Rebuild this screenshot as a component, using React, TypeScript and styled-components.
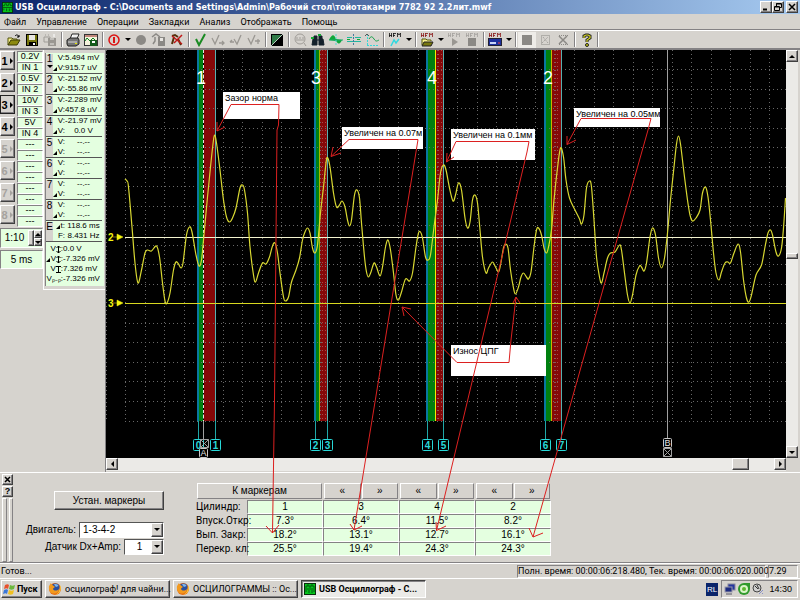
import React from "react";
import styled, { createGlobalStyle, css } from "styled-components";

const FACE = "#d6d3ce";
const MINT = "#e4ffe0";
const SANS = '"Liberation Sans", Arial, sans-serif';
const UI = 'Roboto, "Liberation Sans", sans-serif';
const TITLE = '"DejaVu Sans Condensed", "DejaVu Sans", sans-serif';

const Global = createGlobalStyle`
  * { box-sizing: border-box; }
  body { margin: 0; background: ${FACE}; }
  button, select, input { font: inherit; color: inherit; margin: 0; border-radius: 0; }
`;

const raised = css`
  border: 1px solid;
  border-color: #fff #404040 #404040 #fff;
  box-shadow: inset -1px -1px 0 #848284;
  background: ${FACE};
`;
const sunken = css`
  border: 1px solid;
  border-color: #848284 #fff #fff #848284;
`;

const Page = styled.div`
  position: relative;
  display: flex;
  flex-direction: column;
  min-height: 100vh;
  background: ${FACE};
  color: #000;
  font: 9px/12px ${UI};
  overflow: hidden;
`;

/* ---------- window frame ---------- */
const TitleBar = styled.header`
  display: flex;
  align-items: center;
  height: 14px;
  padding: 0 2px;
  gap: 2px;
  background: linear-gradient(90deg, #0a246a, #a6caf0);
  color: #fff;
  font: bold 9px/14px ${TITLE};
`;
const TitleText = styled.h1`
  flex: 1;
  margin: 0;
  font: inherit;
  white-space: nowrap;
`;
const WindowButtons = styled.div`
  display: flex;
`;
const WindowButton = styled.button<{ $apart?: boolean }>`
  ${raised}
  display: grid;
  place-items: center;
  width: 12px;
  height: 12px;
  padding: 0;
  margin-left: ${(p) => (p.$apart ? 2 : 0)}px;
`;

const MenuBar = styled.nav`
  display: flex;
  align-items: center;
  gap: 10px;
  height: 16px;
  padding: 0 4px;
  border-bottom: 1px solid #848284;
`;
const MenuLink = styled.a`
  color: #000;
  text-decoration: none;
`;

const ToolBar = styled.div`
  display: flex;
  align-items: center;
  height: 20px;
  padding-left: 5px;
  border-top: 1px solid #fff;
  border-bottom: 2px solid #848284;
`;
const ToolButton = styled.button<{ $pressed?: boolean }>`
  display: grid;
  place-items: center;
  width: 18px;
  height: 16px;
  padding: 0;
  border: 0;
  background: ${(p) => (p.$pressed ? "#eeece8" : "transparent")};
`;
const DropButton = styled(ToolButton)`
  width: 9px;
`;
const Divider = styled.span`
  width: 2px;
  height: 15px;
  margin: 0 1px 0 2px;
  border-left: 1px solid #848284;
  border-right: 1px solid #fff;
`;

/* ---------- workspace ---------- */
const Workspace = styled.main`
  display: grid;
  grid-template-columns: 106px minmax(0, 1fr) 14px;
  grid-template-rows: minmax(0, 1fr) 14px;
  flex: 1;
  min-height: 422px;
  border-bottom: 1px solid #fff;
`;
const SidePanel = styled.aside`
  display: flex;
  align-items: flex-start;
  grid-row: 1 / 3;
  border-right: 1px solid #848284;
`;
const ChannelColumn = styled.div`
  width: 43px;
  display: flex;
  flex-direction: column;
  gap: 2px;
  padding-top: 1px;
  font: 9px/10px ${SANS};
`;
const ChannelRow = styled.div`
  display: grid;
  grid-template-columns: 15px 1fr;
  gap: 2px;
  height: 20px;
`;
const ChannelButton = styled.button<{ $active?: boolean }>`
  ${raised}
  display: flex;
  align-items: center;
  justify-content: center;
  gap: 1px;
  padding: 0;
  height: 19px;
  font: bold 11px/12px ${SANS};
  &:disabled { color: #a5a29e; }
  outline: ${(p) => (p.$active ? "1px solid #222" : "none")};
  outline-offset: -1px;
`;
const RangeStack = styled.div`
  display: grid;
  grid-template-rows: 1fr 1fr;
`;
const RangeCell = styled.output`
  ${sunken}
  display: block;
  background: ${MINT};
  text-align: center;
  line-height: 9px;
  overflow: hidden;
`;
const SpinRow = styled.label`
  ${sunken}
  display: flex;
  align-items: center;
  height: 20px;
  margin-top: 1px;
  background: ${MINT};
`;
const SpinInput = styled.input`
  width: 27px;
  padding: 0;
  border: 0;
  background: transparent;
  text-align: center;
  font: 10px/12px ${SANS};
`;
const SpinArrows = styled.span`
  display: grid;
  grid-template-columns: 6px 8px;
  grid-template-rows: 8px 8px;
  background: ${FACE};
`;
const SpinArrow = styled.button<{ $tall?: boolean }>`
  ${raised}
  display: grid;
  place-items: center;
  padding: 0;
  grid-row: ${(p) => (p.$tall ? "1 / 3" : "auto")};
`;
const TimeCell = styled.output`
  ${sunken}
  display: block;
  height: 19px;
  background: ${MINT};
  text-align: center;
  font: 10px/17px ${SANS};
`;

const ReadoutColumn = styled.div`
  flex: 1;
  padding: 3px 1px 3px 1px;
  border-left: 1px solid #fff;
  border-bottom: 1px solid #fff;
`;
const ReadoutBody = styled.div`
  padding: 0 2px 2px 0;
  border-left: 1px solid #848284;
  background: ${MINT};
  font: 8px/10px ${SANS};
`;
const Readout = styled.section`
  display: grid;
  grid-template-columns: 7px 1fr;
  height: 21px;
  border-bottom: 1px solid #555;
`;
const ReadoutTag = styled.div`
  display: flex;
  flex-direction: column;
  align-items: center;
  margin-top: 1px;
  background: ${FACE};
  font: 10px/10px ${SANS};
`;
const ReadoutLine = styled.div<{ $wide?: boolean }>`
  display: grid;
  grid-template-columns: ${(p) => (p.$wide ? 17 : 12)}px 1fr;
  white-space: nowrap;
`;
const Sym = styled.span`
  display: flex;
  align-items: center;
  justify-content: flex-end;
`;
const Value = styled.output<{ $center?: boolean }>`
  text-align: ${(p) => (p.$center ? "center" : "left")};
`;
const Summary = styled.div`
  padding: 2px 0 0;
`;

const Plot = styled.div`
  position: relative;
  background: #000;
  overflow: hidden;
  & > svg { display: block; width: 100%; height: 100%; }
`;
const Note = styled.div<{ $x: number; $y: number; $w: number; $h: number }>`
  position: absolute;
  left: ${(p) => p.$x}px;
  top: ${(p) => p.$y}px;
  width: ${(p) => p.$w}px;
  height: ${(p) => p.$h}px;
  padding: 0 2px;
  background: #fff;
  font: 9px/12px ${SANS};
  white-space: nowrap;
`;
const PointerLayer = styled.svg`
  position: absolute;
  inset: 0;
  width: 100%;
  height: 100%;
  pointer-events: none;
`;

const Scroll = styled.div<{ $vertical?: boolean }>`
  display: flex;
  flex-direction: ${(p) => (p.$vertical ? "column" : "row")};
  background: #ebeae7;
  border-right: ${(p) => (p.$vertical ? `2px solid ${FACE}` : "0")};
  border-bottom: ${(p) => (p.$vertical ? "0" : "1px solid #d6d3ce")};
`;
const ScrollButton = styled.button`
  ${raised}
  display: grid;
  place-items: center;
  width: 12px;
  height: 12px;
  padding: 0;
`;
const Gap = styled.span<{ $grow: number }>`
  flex: ${(p) => p.$grow};
`;
const Thumb = styled.span<{ $vertical?: boolean }>`
  ${raised}
  width: ${(p) => (p.$vertical ? 12 : 17)}px;
  height: ${(p) => (p.$vertical ? 6 : 12)}px;
`;

/* ---------- marker panel ---------- */
const MarkerPanel = styled.section`
  display: flex;
  align-items: flex-start;
  height: 90px;
  padding: 1px 2px 0;
  border-bottom: 1px solid #848284;
  font: 10px/12px ${SANS};
`;
const DockStrip = styled.div`
  display: grid;
  grid-template-columns: 1fr 1fr;
  grid-template-rows: 11px 11px 64px;
  column-gap: 2px;
  row-gap: 1px;
  width: 11px;
`;
const DockButton = styled.button`
  ${raised}
  grid-column: 1 / 3;
  display: grid;
  place-items: center;
  padding: 0;
  font: bold 9px/9px ${SANS};
`;
const Grip = styled.span`
  border: 1px solid;
  border-color: #fff #848284 #848284 #fff;
`;
const SetupForm = styled.div`
  display: grid;
  justify-items: end;
  width: 151px;
  padding-top: 17px;
  font: 10px/12px ${SANS};
`;
const SetButton = styled.button`
  ${raised}
  width: 110px;
  height: 19px;
  padding: 0;
  margin-bottom: 11px;
  font: 10px/13px ${SANS};
`;
const Field = styled.label`
  display: flex;
  align-items: center;
  gap: 3px;
  height: 17px;
  white-space: nowrap;
`;
const SelectBox = styled.span<{ $w: number }>`
  ${sunken}
  border-color: #555 #fff #fff #555;
  display: grid;
  grid-template-columns: 1fr 12px;
  width: ${(p) => p.$w}px;
  height: 16px;
  background: #fff;
`;
const Select = styled.select<{ $center?: boolean }>`
  appearance: none;
  grid-area: 1 / 1 / 2 / 3;
  border: 0;
  padding: 0 12px 0 3px;
  background: transparent;
  text-align: ${(p) => (p.$center ? "center" : "left")};
  font: 10px/12px ${SANS};
`;
const SelectArrow = styled.span`
  ${raised}
  grid-area: 1 / 2 / 2 / 3;
  display: grid;
  place-items: center;
  pointer-events: none;
`;
const MarkerTable = styled.table`
  margin: 9px 0 0 32px;
  width: 355px;
  table-layout: fixed;
  border-collapse: separate;
  border-spacing: 0;
  font: 10px/12px ${SANS};
  th, td { padding: 0; font-weight: normal; }
`;
const LabelCol = styled.col`
  width: 51px;
`;
const HeadCell = styled.th`
  height: 17px;
  vertical-align: top;
`;
const HeadButtons = styled.div`
  display: flex;
  gap: 1px;
  padding: 0 1px;
`;
const StepButton = styled.button`
  border: 1px solid;
  border-color: #fff #848284 #848284 #fff;
  background: ${FACE};
  flex: 1;
  height: 16px;
  padding: 0;
  font: 10px/12px ${SANS};
`;
const RowHead = styled.th`
  height: 14px;
  text-align: left;
  white-space: nowrap;
  font: 10px/12px ${UI};
`;
const Cell = styled.td`
  text-align: center;
  background: ${MINT};
  border: 1px solid;
  border-color: #848284 #fff #fff #848284;
`;

/* ---------- status and task bars ---------- */
const StatusBar = styled.footer`
  display: flex;
  align-items: center;
  gap: 2px;
  height: 15px;
  padding: 0 2px 0 1px;
  border-top: 1px solid #fff;
`;
const StatusText = styled.span`
  flex: 1;
`;
const StatusField = styled.span<{ $w: number }>`
  ${sunken}
  width: ${(p) => p.$w}px;
  height: 13px;
  font: 9px/11px ${UI};
  white-space: nowrap;
`;
const TaskBar = styled.div`
  display: flex;
  align-items: center;
  gap: 3px;
  height: 22px;
  padding: 0 2px 1px 1px;
  border-top: 1px solid #fff;
`;
const TaskButton = styled.button<{ $active?: boolean; $start?: boolean }>`
  ${raised}
  ${(p) =>
    p.$active &&
    css`
      border-color: #404040 #fff #fff #404040;
      box-shadow: inset 1px 1px 0 #848284;
      background: #ebeae7;
    `}
  display: flex;
  align-items: center;
  gap: ${(p) => (p.$start ? 1 : 3)}px;
  width: ${(p) => (p.$start ? 41 : 125)}px;
  height: 18px;
  padding: 0 ${(p) => (p.$start ? 1 : 2)}px;
  font: ${(p) => (p.$active || p.$start ? "bold" : "normal")} 9px/12px ${UI};
  white-space: nowrap;
  svg { flex: none; }
`;
const Spring = styled.span`
  flex: 1;
`;
const Lang = styled.span`
  width: 12px;
  background: #0a246a;
  color: #fff;
  text-align: center;
  font: 8px/13px ${SANS};
`;
const Tray = styled.div`
  ${sunken}
  display: flex;
  align-items: center;
  gap: 2px;
  width: 77px;
  height: 18px;
  padding: 0 2px;
`;
const Clock = styled.time`
  margin-left: auto;
  padding-right: 3px;
  font: 9px/12px ${SANS};
`;

/* ---------- glyphs ---------- */
const Tri = ({ d, c = "#000" }: { d: "u" | "d" | "l" | "r"; c?: string }) => {
  const pts = { u: "0,4 3,1 6,4", d: "0,1 6,1 3,4", l: "4,0 4,6 1,3", r: "1,0 4,3 1,6" }[d];
  const flat = d === "u" || d === "d";
  return (
    <svg width={flat ? 6 : 5} height={flat ? 5 : 6} aria-hidden>
      <polygon points={pts} fill={c} />
    </svg>
  );
};
const Delta = () => (
  <svg width="5" height="7" aria-hidden>
    <path d="M0 6h4V2z" fill="#000" />
  </svg>
);
const Span = ({ bars }: { bars?: boolean }) => (
  <svg width="5" height="9" fill="none" stroke="#000" aria-hidden>
    <path d="M2.500 1v7" />
    <path d={bars ? "M0 1.500h5M0 7.500h5" : "M.5 3l2-2 2 2M.5 6l2 2 2-2"} />
  </svg>
);
const Smile = ({ s = 12 }: { s?: number }) => (
  <svg width={s} height={s} viewBox="0 0 12 12" aria-hidden>
    <rect width="12" height="12" fill="#08300c" />
    <rect x="1" y="1" width="10" height="10" fill="#06c51c" />
    <path d="M1 4h2v-2h2v2h2v-2h2v2h2M1 6h10M2 9v-2M5 10v-3M8 10v-3M10 9v-2" stroke="#045a10" fill="none" />
  </svg>
);
const Ico = ({ children }: { children: React.ReactNode }) => (
  <svg width="16" height="14" viewBox="0 0 16 14" fill="none" aria-hidden>
    {children}
  </svg>
);
const HexWord = ({ c = "#8b1a1a" }: { c?: string }) => (
  <path d="M2.500 0v4M2 2.500h3M4.500 0v4M6.500 0v4M6 .5h3M6 2.500h2M10.500 4v-4l1.500 2 1.500-2v4" stroke={c} strokeWidth=".8" />
);

const icons: Record<string, React.ReactNode> = {
  open: (
    <Ico>
      <path d="M2 12V5h4l1 1h4v2" fill="#f7f08c" stroke="#55550a" />
      <path d="M2 12l3-5h9l-3 5z" fill="#8c8a10" stroke="#3b3b05" />
      <path d="M9 3c2-2 3-1 4 1M13 2v2h-2" stroke="#000" />
    </Ico>
  ),
  save: (
    <Ico>
      <rect x="2.500" y="1.500" width="11" height="11" fill="#77770f" stroke="#000" />
      <rect x="5" y="2" width="6" height="5" fill="#e8e6e2" />
      <rect x="5" y="9" width="7" height="3" fill="#000" />
      <rect x="9" y="10" width="2" height="2" fill="#fff" />
    </Ico>
  ),
  saveAs: (
    <Ico>
      <path d="M2 4h6v5h-6zM3 2h1M6 2h1" stroke="#a09d98" />
      <rect x="6" y="5" width="8" height="8" fill="#9a9792" />
      <path d="M8 6h4M8 11h4" stroke="#e8e6e2" />
      <path d="M12 1v3" stroke="#fff" />
    </Ico>
  ),
  print: (
    <Ico>
      <path d="M5 6l2-5h7l-2 5z" fill="#fff" stroke="#222" />
      <path d="M2 7l3-2h8l1 2v4l-3 2h-8l-1-2z" fill="#777" stroke="#222" />
      <path d="M3 9h9M8 3h4" stroke="#ddd" />
      <rect x="10" y="10" width="2" height="1" fill="#e6e600" />
    </Ico>
  ),
  picture: (
    <Ico>
      <rect x="1.500" y="1.500" width="13" height="11" fill="#f5f3dc" stroke="#333" />
      <path d="M2 3h12" stroke="#8b1a1a" />
      <path d="M2 8l2-3 3 3 3-3 2 2" stroke="#0a7d1d" />
      <rect x="7" y="7" width="7" height="6" fill="#145c1c" />
      <rect x="9" y="8" width="3" height="2" fill="#fff" />
    </Ico>
  ),
  power: (
    <Ico>
      <circle cx="8" cy="7" r="5" stroke="#dc1414" strokeWidth="1.500" />
      <path d="M8 4v6" stroke="#dc1414" strokeWidth="2" />
    </Ico>
  ),
  record: (
    <Ico>
      <circle cx="8" cy="7" r="5" fill="#8b8985" />
    </Ico>
  ),
  recFile: (
    <Ico>
      <path d="M1 4l4-3 4 3M4 4v4l-2 3" stroke="#8b8985" strokeWidth="1.500" />
      <rect x="7" y="4" width="7" height="9" fill="#8b8985" />
      <rect x="9" y="5" width="3" height="3" fill="#e8e6e2" />
    </Ico>
  ),
  erase: (
    <Ico>
      <path d="M3 3l3-1 3 2M5 4l-2 7M9 6l3 6" stroke="#55300a" strokeWidth="2" />
      <path d="M3 3l10 8M13 2L5 10" stroke="#c01818" strokeWidth="1.500" />
    </Ico>
  ),
  check: (
    <Ico>
      <path d="M4 6l3 6 6-11" stroke="#1a8a22" strokeWidth="2" />
    </Ico>
  ),
  checkNext: (
    <Ico>
      <path d="M2 5l3 6 4-9M9 10h5M12 8l2 2-2 2" stroke="#9a9792" strokeWidth="1.300" />
    </Ico>
  ),
  checkPrev: (
    <Ico>
      <path d="M2 9h4M4 7l-2 2M6 6l3 5 4-9" stroke="#9a9792" strokeWidth="1.300" />
    </Ico>
  ),
  checkPlus: (
    <Ico>
      <path d="M2 5l3 6 4-9M9 8h5M12 6v5" stroke="#9a9792" strokeWidth="1.300" />
    </Ico>
  ),
  invert: (
    <Ico>
      <rect x="2" y="1" width="12" height="12" fill="#000" />
      <path d="M3 12V2h10z" fill="#2f7a46" />
      <path d="M2 13L14 1" stroke="#b8c8bc" />
    </Ico>
  ),
  zoomOff: (
    <Ico>
      <circle cx="8" cy="6" r="5" stroke="#a09d98" />
      <path d="M4 5h2M7 5h2M10 5h2M4 7h8M12 10l2 3" stroke="#a09d98" />
    </Ico>
  ),
  find: (
    <Ico>
      <path d="M3 6h4v6h-5zM9 6h4l1 6h-5zM4 3h3v3h-3zM9 3h3v3h-3zM7 7h2" fill="#14202a" stroke="#14202a" />
      <path d="M1 5h3M8 2h3" stroke="#12a832" strokeWidth="2" />
    </Ico>
  ),
  fill: (
    <Ico>
      <path d="M1 7c3-6 5-6 7-1l6 1c-2 4-3 5-6 1z" fill="#0ea83a" />
      <path d="M1 7h14" stroke="#18a868" />
      <path d="M8 1v12" stroke="#50d8d0" strokeDasharray="2 1" />
    </Ico>
  ),
  cursors: (
    <Ico>
      <path d="M1 4.500h5M9 4.500h6M1 8.500h14" stroke="#20b8a0" />
      <path d="M7.500 1v12" stroke="#3f78a0" strokeDasharray="2 1" />
      <path d="M1 6.500h3M11 6.500h3" stroke="#12a832" />
    </Ico>
  ),
  curve: (
    <Ico>
      <path d="M3.500 1v12M3 12.500h11" stroke="#38d8d8" strokeDasharray="2 1" />
      <path d="M5 6c2-3 3-3 5 0s3 2 5 1" stroke="#12a048" />
      <path d="M1 3l2-2 2 2" stroke="#555" />
    </Ico>
  ),
  hex: (
    <Ico>
      <HexWord c="#111" />
      <path d="M4 13l3-6 2 3 3-4" stroke="#30d8e0" strokeWidth="1.500" />
    </Ico>
  ),
  hexOpen: (
    <Ico>
      <HexWord />
      <path d="M3 12V6h4l1 1h4v1" fill="#f7f08c" stroke="#55550a" />
      <path d="M3 13l2-4h9l-2 4z" fill="#77770f" stroke="#222" />
    </Ico>
  ),
  hexPlay: (
    <Ico>
      <HexWord c="#a5a29e" />
      <path d="M6 5l6 4-6 4z" fill="#9a9792" />
    </Ico>
  ),
  hexStop: (
    <Ico>
      <HexWord c="#a5a29e" />
      <rect x="4" y="5" width="8" height="8" fill="#8b8985" />
    </Ico>
  ),
  hexPanel: (
    <Ico>
      <HexWord />
      <rect x="1.500" y="5.500" width="13" height="7" fill="#1c2f9c" stroke="#223" />
      <path d="M3 10h6" stroke="#c8d4f8" strokeWidth="2" />
      <path d="M11 10h2" stroke="#f04040" />
    </Ico>
  ),
  stop: (
    <Ico>
      <rect x="3" y="2" width="10" height="10" fill="#8b8985" />
    </Ico>
  ),
  select: (
    <Ico>
      <rect x="4.500" y="2.500" width="8" height="9" stroke="#8b8985" strokeDasharray="1 1" />
      <path d="M5 10l6-6M6 4l5 6" stroke="#a5a29e" strokeDasharray="2 1" />
    </Ico>
  ),
  deselect: (
    <Ico>
      <path d="M4 2.500h9M4 11.500h9" stroke="#8b8985" strokeDasharray="1 1" />
      <path d="M4 3l8 8M12 3l-8 8" stroke="#8b8985" strokeWidth="1.500" />
    </Ico>
  ),
  help: (
    <Ico>
      <path d="M6 5V3l2-1h2l2 1v2l-3 2v2" stroke="#222" strokeWidth="3" />
      <path d="M6 5V3l2-1h2l2 1v2l-3 2v2" stroke="#d8d820" strokeWidth="1.200" />
      <circle cx="9" cy="12" r="1.500" fill="#c8c810" stroke="#222" />
    </Ico>
  ),
};

const toolGroups: string[][] = [
  ["open", "save", "saveAs"],
  ["print", "picture"],
  ["power", "drop", "record", "recFile", "erase"],
  ["check", "checkNext", "checkPrev", "checkPlus"],
  ["invert"],
  ["zoomOff", "find", "fill", "cursors", "curve"],
  ["hex", "drop"],
  ["hexOpen", "drop", "hexPlay", "hexStop"],
  ["hexPanel", "drop"],
  ["stop", "select", "deselect"],
  ["help"],
];

const Firefox = () => (
  <svg width="14" height="14" viewBox="0 0 14 14" aria-hidden>
    <circle cx="7" cy="7" r="6" fill="#e66a12" />
    <circle cx="7.500" cy="5.500" r="4" fill="#2b4f9e" />
    <path d="M6 2.500c2-1 4 0 4.500 1.500L8 5z" fill="#7fb6ea" />
    <path d="M1 4c1-1 1-2 2-3 0 2 2 2 4 4-1 1-2 1-2 2 1 2 4 2 6 0 0 3-3 5-6 4.500C2 11 .5 8 1 4z" fill="#f29a1e" />
    <path d="M12 3c2 4 0 9-5 10 4-2 5-5 5-10z" fill="#fbd03a" />
  </svg>
);
const Flag = () => (
  <svg width="13" height="12" viewBox="0 0 13 12" aria-hidden>
    <path d="M2 2c2-1 3-1 4 0L5 6c-1-1-2-1-4 0z" fill="#e8502c" />
    <path d="M7 2c2 1 3 1 5 0l-1 4c-2 1-3 1-5 0z" fill="#6cb83c" />
    <path d="M1 7c2-1 3-1 4 0l-1 4c-1-1-2-1-4 0z" fill="#3c78d8" />
    <path d="M6 7c2 1 3 1 5 0l-1 4c-2 1-3 1-5 0z" fill="#f0c020" />
  </svg>
);

/* ---------- oscillogram ---------- */
const TRACE: [number, number][] = [
  [125, 179], [127, 181], [128.5, 187], [132, 227], [135, 263], [138, 283], [141.5, 270], [145, 253], [147.5, 250], [151.5, 251],
  [156.5, 246], [159.5, 257], [162.5, 283], [165, 301], [167, 303], [170, 293], [173.5, 270], [176, 262], [178.5, 264], [181, 268],
  [183, 263], [186.5, 235], [189.5, 227], [192, 232], [196, 255], [199, 266], [201.5, 260], [203.5, 240], [207.5, 197], [210.5, 167],
  [213, 144], [214.5, 135], [216.5, 143], [220, 170], [223.5, 200], [226.5, 217], [229.5, 222], [232.5, 218], [236, 208], [240, 188],
  [242.5, 185], [244.5, 190], [247.5, 213], [250, 247], [253.5, 275], [255.5, 282], [258.5, 273], [262.5, 263], [266, 264], [269.5, 257],
  [272.5, 246], [275, 243], [277.5, 253], [280, 273], [283.5, 297], [285.5, 301], [288.5, 297], [291.5, 282], [296, 270], [299.5, 258],
  [302.5, 240], [305, 232], [307.5, 228], [310, 233], [312.5, 248], [315, 253], [317.5, 245], [320.5, 213], [323.5, 187], [326, 163],
  [327.5, 157.5], [330, 167], [333.5, 193], [336.5, 207], [339.5, 205], [342, 201], [345, 207], [347.5, 220], [349.5, 226], [351.5, 220],
  [354.5, 195], [357, 190], [359.5, 198], [361.5, 223], [364.5, 257], [366.5, 272], [368.5, 277], [371, 272], [374, 263], [376.5, 267],
  [380, 276], [382.5, 267], [385.5, 247], [388, 240], [390.5, 250], [393.5, 273], [396, 295], [398.5, 300], [401.5, 292], [405.5, 279],
  [409.5, 281], [412.5, 273], [416, 247], [418.5, 233], [420.5, 232], [422.5, 238], [425.5, 257], [428, 260], [430.5, 255], [434, 227],
  [437.5, 200], [440.5, 173], [443.5, 165], [446, 170], [449.5, 188], [453, 201], [455.5, 195], [458.5, 183], [461.5, 190], [465, 218],
  [467.5, 228], [470, 222], [472.5, 200], [475, 195], [477.5, 203], [480, 230], [482.5, 257], [486, 273], [488.5, 268], [492.5, 262],
  [495.5, 267], [498.5, 272], [500.5, 265], [503.5, 248], [505.5, 244], [508, 248], [510.5, 270], [513.5, 288], [515.5, 294], [518.5, 287],
  [521, 277], [523.5, 273], [526.5, 277], [528.5, 279], [531, 272], [534, 247], [536.5, 230], [538.5, 228], [541.5, 235], [544, 248],
  [546.5, 253], [548.5, 247], [551.5, 230], [554, 200], [557.5, 168], [560.5, 148], [563.5, 157], [566, 180], [569.5, 198], [575, 210],
  [579.5, 219], [581.5, 224], [584, 215], [586.5, 188], [589.5, 181], [591.5, 187], [594, 220], [596.5, 257], [599.5, 277], [601.5, 283],
  [604, 273], [607.5, 258], [610.5, 253], [615, 252], [619.5, 245], [621.5, 250], [624.5, 273], [627.5, 295], [630, 303], [632.5, 295],
  [636, 275], [639.5, 266], [641.5, 267], [644, 271], [646.5, 263], [650, 237], [652.5, 228], [655.5, 235], [658.5, 258], [661.5, 268],
  [664.5, 258], [667.5, 233], [670.5, 200], [674, 167], [676.5, 144], [678.5, 136], [680.5, 144], [684, 173], [687.5, 200], [690, 215],
  [692.5, 221], [696, 218], [700, 210], [702.5, 193], [705.5, 187], [708, 197], [710.5, 220], [713.5, 253], [716, 273], [719, 280],
  [721.5, 272], [725, 263], [728, 262], [730.5, 263], [734, 253], [738, 244], [740.5, 252], [743.5, 280], [746.5, 298], [749, 302],
  [751.5, 295], [756, 275], [761.5, 265], [765, 247], [768, 233], [770.5, 230], [772.5, 235], [776, 252], [778.5, 256], [781.5, 248],
  [783.5, 228], [785.5, 198],
];
const tracePath = TRACE.slice(1).reduce((d, [x, y], i) => {
  const p0 = TRACE[Math.max(i - 1, 0)];
  const p1 = TRACE[i];
  const p3 = TRACE[Math.min(i + 2, TRACE.length - 1)];
  const c1 = [p1[0] + (x - p0[0]) / 6, p1[1] + (y - p0[1]) / 6];
  const c2 = [x - (p3[0] - p1[0]) / 6, y - (p3[1] - p1[1]) / 6];
  return `${d}C${c1.join(" ")} ${c2.join(" ")} ${x} ${y}`;
}, `M${TRACE[0].join(" ")}`);

const bands = [
  { n: "1", label: 201, edge: 198, split: 203, red: 204, end: 215, line: "#e8e8e8", dash: "3 2", tags: ["0", "1"] },
  { n: "3", label: 316, edge: 315, split: 319, red: 320, end: 327, line: "#a8b400", dash: "", tags: ["2", "3"] },
  { n: "4", label: 432, edge: 427, split: 435, red: 436, end: 443, line: "#f0f000", dash: "", tags: ["4", "5"] },
  { n: "2", label: 548, edge: 545, split: 551, red: 552, end: 561, line: "#c8b400", dash: "", tags: ["6", "7"] },
];
const columns = Array.from({ length: 34 }, (_, i) => Math.round(125 + i * 19.53));
const rows = Array.from({ length: 19 }, (_, i) => Math.round(69 + i * 19.53));

const MarkerTag = ({ x, y, t }: { x: number; y: number; t: string }) => (
  <g>
    <rect x={x - 4.5} y={y - 5.5} width="10" height="11" rx="1" fill="#000" stroke="#28d8d8" />
    <text x={x + 0.5} y={y + 4} textAnchor="middle" fill="#28d8d8" fontFamily={SANS} fontWeight="bold" fontSize="10">
      {t}
    </text>
  </g>
);
const CursorTag = ({ x, y, t }: { x: number; y: number; t: string }) => (
  <g>
    <rect x={x - 3.5} y={y - 4.5} width="8" height="9" rx="1" fill="#000" stroke="#c8c8c8" />
    <text x={x + 0.5} y={y + 3} textAnchor="middle" fill="#e0e0e0" fontFamily={SANS} fontSize="9">
      {t}
    </text>
  </g>
);
const CrossTag = ({ x, y }: { x: number; y: number }) => (
  <path d={`M${x - 3.5} ${y - 3.5}h8v8h-8zl8 8m0-8l-8 8`} fill="none" stroke="#a0a0a0" strokeWidth="1" />
);

const Oscillogram = () => (
  <svg viewBox="106 50 680 408" preserveAspectRatio="xMinYMin meet" role="img" aria-label="Осциллограмма">
    <g shapeRendering="crispEdges" fill="none">
      {bands.map((b) => (
        <g key={b.n}>
          <rect x={b.edge} y="50" width={b.split - b.edge} height="371" fill="#008010" />
          <rect x={b.red} y="50" width={b.end - b.red} height="371" fill="#840808" />
        </g>
      ))}
      {columns.map((x) => (
        <path key={x} d={`M${x + 0.5} 50V421`} stroke="#686868" strokeDasharray="1 3" />
      ))}
      {rows.map((y) => (
        <path key={y} d={`M125 ${y + 0.5}H786`} stroke="#686868" strokeDasharray="1 3" />
      ))}
      <path d="M106.500 50V421" stroke="#686868" strokeDasharray="1 3" />
      {bands.map((b) => (
        <g key={b.n}>
          {b.n !== "1" && (
            <path d={`M${b.red + 2.5} 50V421M${b.red + 5.5} 50V421`} stroke="#b04848" strokeDasharray="1 3" />
          )}
          <path d={`M${b.edge} 50V421`} stroke="#0878a0" strokeWidth="2" />
          <path d={`M${b.edge + 0.5} 421V440M${b.end + 0.5} 421V440`} stroke="#20a8a8" />
          <path d={`M${b.split + 0.5} 50V421`} stroke={b.line} strokeDasharray={b.dash} />
          <path d={`M${b.end + 0.5} 50V421`} stroke="#58b0b0" />
        </g>
      ))}
      <path d="M203.500 421V440M667.500 50V440" stroke="#a0a0a0" />
      <path d="M125 237.500H786" stroke="#f4f4d0" />
      <path d="M125 303.500H786" stroke="#d8d820" />
    </g>
    <path d={tracePath} fill="none" stroke="#d8d832" strokeWidth="1.200" />
    {bands.map((b) => (
      <g key={b.n}>
        <text x={b.label} y="84" textAnchor="middle" fill="#fff" fontFamily={SANS} fontSize="18">
          {b.n}
        </text>
        <MarkerTag x={b.edge} y={445} t={b.tags[0]} />
        <MarkerTag x={b.end} y={445} t={b.tags[1]} />
      </g>
    ))}
    <CrossTag x={204} y={443} />
    <CursorTag x={203} y={453} t="A" />
    <CursorTag x={667} y={443} t="B" />
    <CrossTag x={667} y={452} />
    {[237, 303].map((y, i) => (
      <g key={y} fill="#f4f410">
        <text x="108" y={y + 4} fontFamily={SANS} fontWeight="bold" fontSize="10">
          {i + 2}
        </text>
        <path d={`M113 ${y}h4v-3l6 3-6 3v-3`} stroke="#f4f410" strokeWidth="0.500" />
      </g>
    ))}
  </svg>
);

const notes = [
  { x: 117, y: 42, w: 77, h: 27, t: "Зазор норма" },
  { x: 236, y: 77, w: 81, h: 22, t: "Увеличен на 0.07м" },
  { x: 345, y: 79, w: 84, h: 31, t: "Увеличен на 0.1мм" },
  { x: 468, y: 58, w: 86, h: 19, t: "Увеличен на 0.05мм" },
  { x: 345, y: 295, w: 95, h: 31, t: "Износ ЦПГ" },
];

const Pointers = () => (
  <PointerLayer viewBox="0 0 800 600" preserveAspectRatio="xMinYMin meet" aria-hidden>
    <g fill="none" stroke="#dc2020" strokeWidth="1">
      <path d="M217 131L231 104.500H279L278.500 125L277 130L274.500 400L272.500 533" />
      <path d="M217 122V131L225 127M266 526L272.500 533L279 525" />
      <path d="M331 156.500L349 139.500H418L416 152L354 530" />
      <path d="M333 147L331 156.500L341 153M350 524L354 530L362 526" />
      <path d="M446.500 162L456 141.500H529L527 152L436.500 530.500" />
      <path d="M447 153L446.500 162L454 157M436 522L436.500 530.500L446 526" />
      <path d="M567 144.500L581 118.500H651L648 130L533 537" />
      <path d="M567 136L567 144.500L576 140M529 528L533 537L543 533" />
      <path d="M402 307L457 362.500H509L511 340L516 297" />
      <path d="M404 316L402 307L411 309M513 303L516 297L520 303" />
    </g>
  </PointerLayer>
);

/* ---------- data ---------- */
const channels: [string, string][] = [
  ["0.2V", "IN 1"], ["0.5V", "IN 2"], ["10V", "IN 3"], ["5V", "IN 4"],
  ["---", "---"], ["---", "---"], ["---", "---"], ["---", "---"],
];
const readouts: [string, string][] = [
  ["5.494 mV", "915.7 uV"], ["-21.52 mV", "-55.86 mV"], ["-2.289 mV", "457.8 uV"], ["-21.97 mV", "0.0 V"],
  ["--.--", "--.--"], ["--.--", "--.--"], ["--.--", "--.--"], ["--.--", "--.--"],
];
const summary: [React.ReactNode, string][] = [
  [<>V<Span />:</>, "0.0 V"],
  [<><Delta />V<Span />:</>, "-7.326 mV"],
  [<>V<Span bars />:</>, "7.326 mV"],
  [<>Vₚ₋ₚ:</>, "-7.326 mV"],
];
const tableRows = [
  ["Цилиндр:", "1", "3", "4", "2"],
  ["Впуск.Откр:", "7.3°", "6.4°", "11.5°", "8.2°"],
  ["Вып. Закр:", "18.2°", "13.1°", "12.7°", "16.1°"],
  ["Перекр. кл:", "25.5°", "19.4°", "24.3°", "24.3°"],
];

export default function App() {
  return (
    <Page>
      <Global />
      <TitleBar>
        <Smile s={11} />
        <TitleText>USB Осциллограф - C:\Documents and Settings\Admin\Рабочий стол\тойотакамри 7782 92 2.2лит.mwf</TitleText>
        <WindowButtons>
          <WindowButton aria-label="Свернуть">
            <svg width="8" height="8"><path d="M1 6.500h4" stroke="#000" strokeWidth="2" /></svg>
          </WindowButton>
          <WindowButton aria-label="Восстановить">
            <svg width="8" height="8" fill="none" stroke="#000"><path d="M2.500 3V.5h5v4H6M2 1h5M.5 3.500h5v4h-5zM1 4h4" /></svg>
          </WindowButton>
          <WindowButton $apart aria-label="Закрыть">
            <svg width="8" height="8"><path d="M1 1l6 6M7 1L1 7" stroke="#000" strokeWidth="1.500" /></svg>
          </WindowButton>
        </WindowButtons>
      </TitleBar>
      <MenuBar>
        {["Файл", "Управление", "Операции", "Закладки", "Анализ", "Отображать", "Помощь"].map((m) => (
          <MenuLink key={m} href="#">{m}</MenuLink>
        ))}
      </MenuBar>
      <ToolBar>
        {toolGroups.map((group, g) => (
          <React.Fragment key={g}>
            {group.map((name, i) =>
              name === "drop" ? (
                <DropButton key={i} aria-label="Ещё"><Tri d="d" /></DropButton>
              ) : (
                <ToolButton key={i} aria-label={name} $pressed={name === "stop"}>{icons[name]}</ToolButton>
              )
            )}
            <Divider />
          </React.Fragment>
        ))}
      </ToolBar>

      <Workspace>
        <SidePanel>
          <ChannelColumn>
            {channels.map(([range, input], i) => (
              <ChannelRow key={i}>
                <ChannelButton disabled={i > 3} $active={i === 2}>
                  {i + 1}
                  <Tri d="r" c={i > 3 ? "#a5a29e" : "#000"} />
                </ChannelButton>
                <RangeStack>
                  <RangeCell>{range}</RangeCell>
                  <RangeCell>{input}</RangeCell>
                </RangeStack>
              </ChannelRow>
            ))}
            <SpinRow>
              <SpinInput aria-label="Масштаб" defaultValue="1:10" />
              <SpinArrows>
                <SpinArrow $tall aria-label="Шаг" />
                <SpinArrow aria-label="Больше"><Tri d="u" /></SpinArrow>
                <SpinArrow aria-label="Меньше"><Tri d="d" /></SpinArrow>
              </SpinArrows>
            </SpinRow>
            <TimeCell>5 ms</TimeCell>
          </ChannelColumn>
          <ReadoutColumn>
            <ReadoutBody>
              {readouts.map(([v, dv], i) => (
                <Readout key={i}>
                  <ReadoutTag>
                    {i + 1}
                    {i === 0 && <Tri d="d" />}
                  </ReadoutTag>
                  <div>
                    <ReadoutLine><Sym>V:</Sym><Value $center={i > 3}>{v}</Value></ReadoutLine>
                    <ReadoutLine><Sym><Delta />V:</Sym><Value $center={i > 2}>{dv}</Value></ReadoutLine>
                  </div>
                </Readout>
              ))}
              <Readout>
                <ReadoutTag>E</ReadoutTag>
                <div>
                  <ReadoutLine><Sym><Delta />t:</Sym><Value $center>118.6 ms</Value></ReadoutLine>
                  <ReadoutLine><Sym>F:</Sym><Value $center>8.431 Hz</Value></ReadoutLine>
                </div>
              </Readout>
              <Summary>
                {summary.map(([s, v], i) => (
                  <ReadoutLine key={i} $wide><Sym>{s}</Sym><Value>{v}</Value></ReadoutLine>
                ))}
              </Summary>
            </ReadoutBody>
          </ReadoutColumn>
        </SidePanel>
        <Plot>
          <Oscillogram />
          {notes.map((n) => (
            <Note key={n.t} $x={n.x} $y={n.y} $w={n.w} $h={n.h}>{n.t}</Note>
          ))}
        </Plot>
        <Scroll $vertical>
          <ScrollButton aria-label="Вверх"><Tri d="u" /></ScrollButton>
          <Gap $grow={191} />
          <Thumb $vertical />
          <Gap $grow={187} />
          <ScrollButton aria-label="Вниз"><Tri d="d" /></ScrollButton>
        </Scroll>
        <Scroll>
          <ScrollButton aria-label="Влево"><Tri d="l" /></ScrollButton>
          <Gap $grow={614} />
          <Thumb />
          <Gap $grow={25} />
          <ScrollButton aria-label="Вправо"><Tri d="r" /></ScrollButton>
        </Scroll>
      </Workspace>

      <MarkerPanel>
        <DockStrip>
          <DockButton aria-label="Закрыть панель">
            <svg width="7" height="7"><path d="M1 1l5 5M6 1L1 6" stroke="#000" strokeWidth="1.500" /></svg>
          </DockButton>
          <DockButton>?</DockButton>
          <Grip />
          <Grip />
        </DockStrip>
        <SetupForm>
          <SetButton>Устан. маркеры</SetButton>
          <Field>
            Двигатель:
            <SelectBox $w={85}>
              <Select defaultValue="1-3-4-2"><option>1-3-4-2</option></Select>
              <SelectArrow><Tri d="d" /></SelectArrow>
            </SelectBox>
          </Field>
          <Field>
            Датчик Dx+Amp:
            <SelectBox $w={40}>
              <Select $center defaultValue="1"><option>1</option></Select>
              <SelectArrow><Tri d="d" /></SelectArrow>
            </SelectBox>
          </Field>
        </SetupForm>
        <MarkerTable>
          <colgroup>
            <LabelCol /><col /><col /><col /><col />
          </colgroup>
          <thead>
            <tr>
              <HeadCell colSpan={2}><HeadButtons><StepButton>К маркерам</StepButton></HeadButtons></HeadCell>
              {[0, 1, 2].map((i) => (
                <HeadCell key={i}>
                  <HeadButtons><StepButton>«</StepButton><StepButton>»</StepButton></HeadButtons>
                </HeadCell>
              ))}
            </tr>
          </thead>
          <tbody>
            {tableRows.map(([head, ...cells]) => (
              <tr key={head}>
                <RowHead scope="row">{head}</RowHead>
                {cells.map((c, i) => <Cell key={i}>{c}</Cell>)}
              </tr>
            ))}
          </tbody>
        </MarkerTable>
      </MarkerPanel>

      <StatusBar>
        <StatusText>Готов...</StatusText>
        <StatusField $w={249}>Полн. время: 00:00:06:218.480, Тек. время: 00:00:06:020.000</StatusField>
        <StatusField $w={30}>7.29</StatusField>
      </StatusBar>
      <TaskBar>
        <TaskButton $start><Flag />Пуск</TaskButton>
        <TaskButton><Firefox />осцилограф! для чайни...</TaskButton>
        <TaskButton><Firefox />ОСЦИЛОГРАММЫ :: Ос...</TaskButton>
        <TaskButton $active><Smile />USB Осциллограф - С...</TaskButton>
        <Spring />
        <Lang>RL</Lang>
        <Tray>
          <svg width="12" height="12" aria-hidden>
            <rect x="4" y="1" width="7" height="6" fill="#2636a0" stroke="#889" />
            <rect x="1" y="4" width="7" height="5" fill="#1c2a80" stroke="#99a" />
            <path d="M2 11h6" stroke="#556" />
          </svg>
          <svg width="12" height="12" aria-hidden>
            <path d="M6 0h6v6a6 6 0 1 1-6-6z" fill="#2f9a2c" />
            <circle cx="6" cy="6" r="4" fill="#d8f4c8" />
            <circle cx="6" cy="6" r="2" fill="#5cb830" />
          </svg>
          <svg width="12" height="12" aria-hidden>
            <circle cx="5" cy="5" r="4" fill="#d0d0d0" stroke="#444" />
            <path d="M3 3l3 3M5 2l2 4" stroke="#333" />
            <path d="M7 11l4-4M10 11l1-1" stroke="#8890c8" />
          </svg>
          <Clock>14:30</Clock>
        </Tray>
      </TaskBar>
      <Pointers />
    </Page>
  );
}
